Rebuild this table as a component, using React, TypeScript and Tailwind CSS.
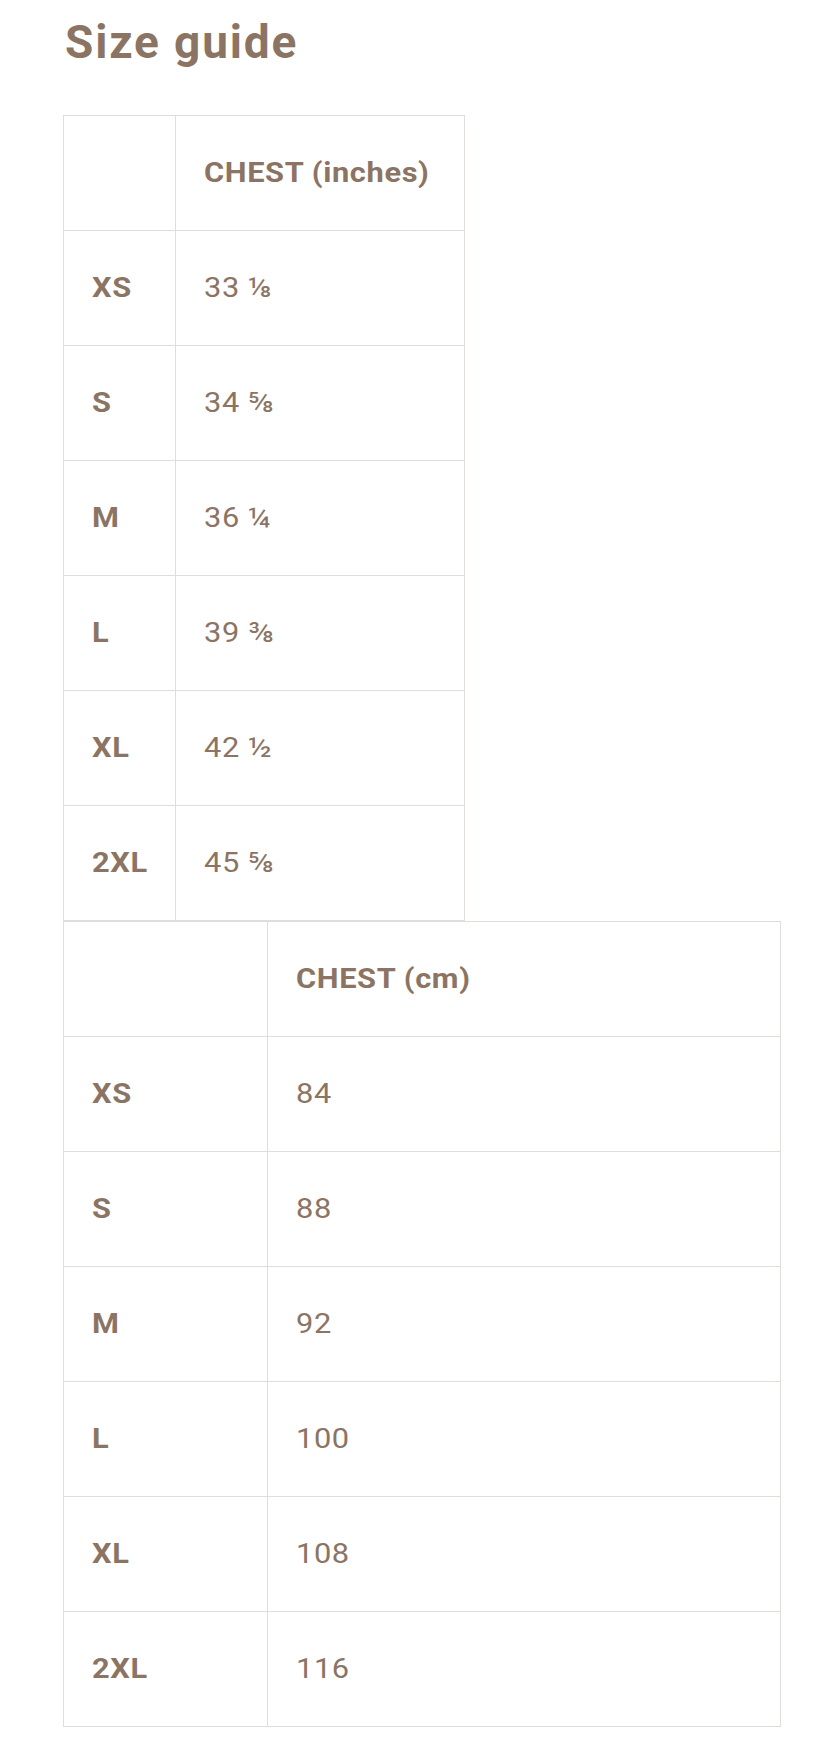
const inches: [string, string][] = [
  ['XS', '33 ⅛'],
  ['S', '34 ⅝'],
  ['M', '36 ¼'],
  ['L', '39 ⅜'],
  ['XL', '42 ½'],
  ['2XL', '45 ⅝'],
];

const cm: [string, string][] = [
  ['XS', '84'],
  ['S', '88'],
  ['M', '92'],
  ['L', '100'],
  ['XL', '108'],
  ['2XL', '116'],
];

// the text in the source is a touch wider than Roboto, so stretch it sideways a bit
function Txt({ children }: { children: React.ReactNode }) {
  return <span className="inline-block origin-left scale-x-[1.1] whitespace-nowrap">{children}</span>;
}

function SizeTable({
  heading,
  rows,
  firstCol,
  secondCol,
}: {
  heading: string;
  rows: [string, string][];
  firstCol: string;
  secondCol: string;
}) {
  const cell = 'h-[115px] border border-[#e2ddd8] px-[28px] text-left align-middle';
  return (
    <table className="table-fixed border-collapse">
      <colgroup>
        <col className={firstCol} />
        <col className={secondCol} />
      </colgroup>
      <thead>
        <tr>
          <th className={cell} />
          <th className={`${cell} font-bold`}>
            <Txt>{heading}</Txt>
          </th>
        </tr>
      </thead>
      <tbody>
        {rows.map(([size, value]) => (
          <tr key={size}>
            <td className={`${cell} font-bold`}>
              <Txt>{size}</Txt>
            </td>
            <td className={`${cell} font-normal`}>
              <Txt>{value}</Txt>
            </td>
          </tr>
        ))}
      </tbody>
    </table>
  );
}

export default function App() {
  return (
    <main className="min-h-[1757px] bg-white pl-[63px] pt-[19px] font-['Roboto',sans-serif] text-[#8b7463]">
      <h1 className="pl-[2px] text-[46px] font-bold leading-none tracking-[0.04em]">Size guide</h1>

      <div className="mt-[50px] text-[28px] leading-none tracking-[0.02em]">
        <SizeTable heading="CHEST (inches)" rows={inches} firstCol="w-[112px]" secondCol="w-[289px]" />
        <SizeTable heading="CHEST (cm)" rows={cm} firstCol="w-[204px]" secondCol="w-[513px]" />
      </div>
    </main>
  );
}
